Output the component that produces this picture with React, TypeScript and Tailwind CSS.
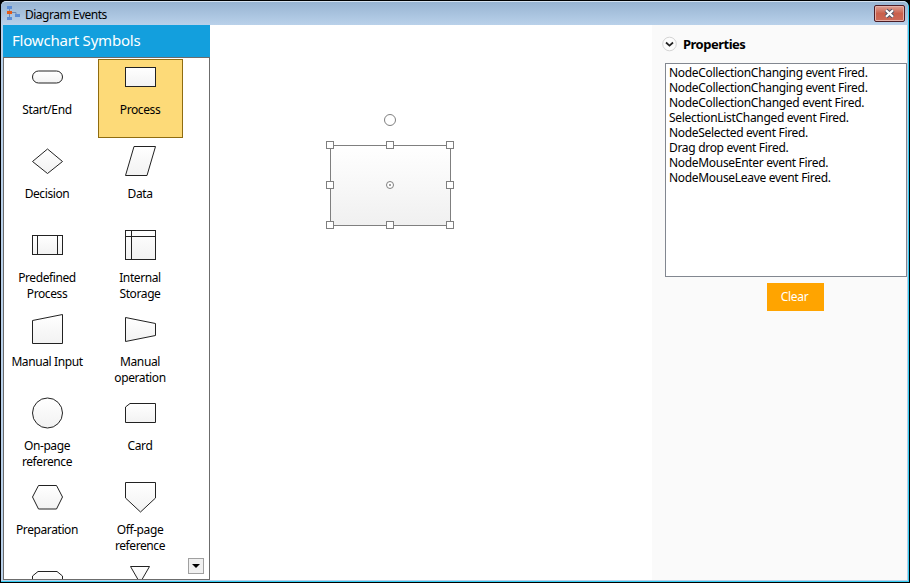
import type { ReactNode } from "react";

type PaletteItem = { lines: string[]; shape: ReactNode; selected?: boolean };

const items: PaletteItem[] = [
  { lines: ["Start/End"], shape: <rect x="1.5" y="12" width="30" height="12" rx="6" /> },
  { lines: ["Process"], selected: true, shape: <rect x="1.5" y="8.5" width="30" height="19" /> },
  { lines: ["Decision"], shape: <path d="M16.5 6 31.5 18.5 16.5 30.5 1.5 18.5Z" /> },
  { lines: ["Data"], shape: <path d="M10 3.5H31.5L23 32.5H1.5Z" /> },
  {
    lines: ["Predefined", "Process"],
    shape: <><rect x="1.5" y="8.5" width="30" height="19" /><path d="M6.5 8.5v19M26.5 8.5v19" /></>,
  },
  {
    lines: ["Internal", "Storage"],
    shape: <><rect x="1.5" y="3.5" width="30" height="29" /><path d="M7.5 3.5v29M1.5 9.5h30" /></>,
  },
  { lines: ["Manual Input"], shape: <path d="M1.5 9.5 31.5 3.5V32.5H1.5Z" /> },
  { lines: ["Manual", "operation"], shape: <path d="M1.5 6.5 31.5 12.5V24.5L1.5 30.5Z" /> },
  { lines: ["On-page", "reference"], shape: <circle cx="16.5" cy="18" r="15" /> },
  { lines: ["Card"], shape: <path d="M6 8.5H31.5V27.5H1.5V12Z" /> },
  { lines: ["Preparation"], shape: <path d="M7.5 6.5H25.5L31.5 18 25.5 30H7.5L1.5 18Z" /> },
  { lines: ["Off-page", "reference"], shape: <path d="M1.5 3.5H31.5V19L16.5 33 1.5 19Z" /> },
  { lines: [], shape: <path d="M7 8.5H26L31.5 13V29H1.5V13Z" /> },
  { lines: [], shape: <path d="M6.5 3.5H25.5L16 20Z" /> },
];

function PaletteCell({ item }: { item: PaletteItem }) {
  return (
    <div
      className={`flex h-[79px] w-[85px] shrink-0 flex-col items-center border ${
        item.selected ? "border-[#8f6c10] bg-[#fdda78]" : "border-transparent"
      }`}
    >
      <svg width="33" height="36" viewBox="0 0 33 36" className="-mt-px shrink-0" fill="url(#shade)" stroke="#222" strokeWidth="1">
        {item.shape}
      </svg>
      <div className="mt-[7px] pr-px text-center text-[12px] leading-4 tracking-[-0.4px] whitespace-nowrap text-black">
        {item.lines.map((l) => (
          <div key={l}>{l}</div>
        ))}
      </div>
    </div>
  );
}

const events = [
  "NodeCollectionChanging event Fired.",
  "NodeCollectionChanging event Fired.",
  "NodeCollectionChanged event Fired.",
  "SelectionListChanged event Fired.",
  "NodeSelected event Fired.",
  "Drag drop event Fired.",
  "NodeMouseEnter event Fired.",
  "NodeMouseLeave event Fired.",
];

function TitleBar() {
  return (
    <header className="flex h-[24px] shrink-0 items-start justify-between rounded-t-[5px] border-t border-[#d5e2f0] bg-linear-to-b from-[#98b4d2] to-[#b9d1ea] pr-[3px] pl-[5px]">
      <div className="flex">
        <svg width="14" height="16" viewBox="0 0 14 16" className="mt-[3px]">
          <path d="M3.5 3v10M5 7.5H10V9" stroke="#6f88ae" fill="none" />
          <rect x="1" y="1" width="5" height="3" fill="#5b8dd6" />
          <rect x="1" y="6" width="5" height="3" fill="#e65a16" />
          <rect x="9" y="9" width="5" height="3" fill="#5b8dd6" />
          <rect x="1" y="12" width="5" height="3" fill="#5b8dd6" />
        </svg>
        <span className="mt-[3px] ml-[5px] text-[12px] leading-[19px] tracking-[-0.5px] text-black">Diagram Events</span>
      </div>
      <button className="mt-[3px] flex h-[17px] w-[31px] items-center justify-center rounded-[2px] border border-[#4b1d26] bg-linear-to-b from-[#dda095] from-0% via-[#c9604c] via-50% to-[#cd6a58] shadow-[inset_0_0_0_1px_#e5b0a8]">
        <svg width="13" height="11" viewBox="0 0 13 11">
          <path d="M3 2.2 10 8.8M10 2.2 3 8.8" stroke="#535666" strokeWidth="4.2" />
          <path d="M3 2.2 10 8.8M10 2.2 3 8.8" stroke="#fff" strokeWidth="2.2" />
        </svg>
      </button>
    </header>
  );
}

function Palette() {
  return (
    <aside className="flex w-[207px] shrink-0 flex-col">
      <h1 className="h-[32px] shrink-0 bg-[#139fdd] pl-[9px] text-[15px] leading-[31px] tracking-[-0.2px] text-white">Flowchart Symbols</h1>
      <div className="relative min-h-0 flex-1 overflow-hidden border border-[#6c6c6c] bg-white">
        <div className="mt-px ml-px grid grid-cols-[85px_85px] gap-x-[8px] gap-y-[5px]">
          {items.map((item, i) => (
            <PaletteCell key={i} item={item} />
          ))}
        </div>
        <button className="absolute right-[5px] bottom-[5px] flex h-4 w-4 items-center justify-center border border-[#a0a0a0] bg-[#f0f0f0]">
          <svg width="8" height="4" viewBox="0 0 8 4">
            <path d="M0 0H8L4 4Z" />
          </svg>
        </button>
      </div>
    </aside>
  );
}

const handles = [
  [10, 35], [70, 35], [130, 35],
  [10, 75], [130, 75],
  [10, 115], [70, 115], [130, 115],
];

function Canvas() {
  return (
    <main className="w-[442px] shrink-0 bg-white pt-[85px] pl-[110px]">
      <svg width="140" height="130" viewBox="0 0 140 130" fill="white" stroke="#7f7f7f">
        <rect x="10.5" y="35.5" width="120" height="80" fill="url(#node)" />
        {handles.map(([x, y]) => (
          <rect key={`${x}-${y}`} x={x - 3.5} y={y - 3.5} width="7" height="7" />
        ))}
        <circle cx="70" cy="10" r="5.5" />
        <circle cx="70" cy="75" r="3.5" />
        <circle cx="70" cy="75" r="1" fill="#7f7f7f" stroke="none" />
      </svg>
    </main>
  );
}

function Properties() {
  return (
    <section className="flex min-w-0 flex-1 flex-col bg-[#fafafa]">
      <div className="flex h-[38px] items-center pl-[10px]">
        <svg width="16" height="16" viewBox="0 0 16 16" fill="none">
          <circle cx="7.5" cy="8" r="6.8" fill="#fcfcfc" stroke="#d4d4d4" />
          <path d="M4 6.5 7.5 9.7 11 6.5" stroke="#222" strokeWidth="1.7" />
        </svg>
        <h2 className="ml-[5px] text-[13px] leading-5 font-bold tracking-[-0.5px] text-black">Properties</h2>
      </div>
      <ul className="ml-[13px] h-[214px] border border-[#828790] bg-white py-px pl-[3px] text-[12px] leading-[15px] tracking-[-0.31px] whitespace-nowrap text-black">
        {events.map((e, i) => (
          <li key={i}>{e}</li>
        ))}
      </ul>
      <button className="mt-[6px] ml-[115px] h-[28px] w-[57px] bg-[#ffa400] pr-[2px] text-[12px] leading-[28px] tracking-[-0.3px] text-white">Clear</button>
    </section>
  );
}

export default function App() {
  return (
    <div className="h-[583px] w-[910px] overflow-hidden bg-black font-['Noto_Sans','Open_Sans',sans-serif]">
      <svg width="0" height="0" className="absolute">
        <defs>
          <linearGradient id="shade" x1="0" y1="0" x2="0" y2="1">
            <stop stopColor="#fff" />
            <stop offset="1" stopColor="#f2f2f2" />
          </linearGradient>
          <linearGradient id="node" x1="0" y1="0" x2="0" y2="1">
            <stop stopColor="#fff" />
            <stop offset="1" stopColor="#f0f0f0" />
          </linearGradient>
        </defs>
      </svg>
      <div className="flex h-[583px] flex-col pt-px pr-px pb-px pl-px">
        <div className="flex min-h-0 flex-1 flex-col rounded-t-[6px] border-r border-b border-[#35cdf2] bg-[#b9d1ea]">
          <TitleBar />
          <div className="flex min-h-0 flex-1 pr-px pb-px pl-[2px]">
            <Palette />
            <Canvas />
            <Properties />
          </div>
        </div>
      </div>
    </div>
  );
}
